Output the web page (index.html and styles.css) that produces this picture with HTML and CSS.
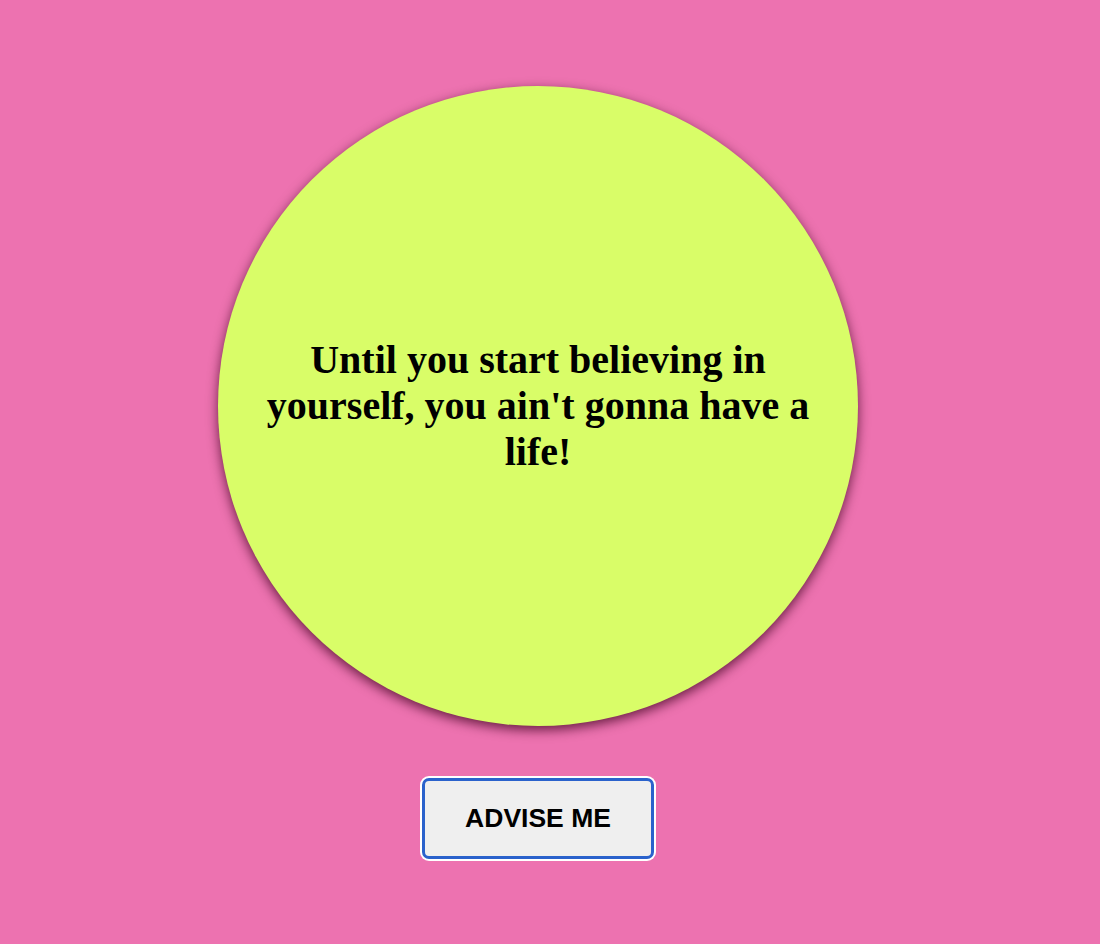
FILE: index.html
```html
<!DOCTYPE html>
<html>
<head>
<meta charset="utf-8">
<link rel="stylesheet" href="styles.css">
</head>
<body>
<main class="app">
  <div class="card">
    <h1 class="advice">Until you start believing in yourself, you ain't gonna have a life!</h1>
  </div>
  <button class="btn">ADVISE ME</button>
</main>
</body>
</html>
```
FILE: styles.css
```css
html, body {
  margin: 0;
  padding: 0;
  height: 100%;
}
body {
  background: #ed72b0;
  font-family: "Liberation Serif", "Times New Roman", serif;
}
.app {
  display: flex;
  flex-direction: column;
  align-items: center;
  padding-top: 86px;
  padding-right: 24px;
}
.card {
  width: 640px;
  height: 640px;
  border-radius: 50%;
  background: #d9fd68;
  box-shadow: 0 4px 12px rgba(60, 0, 30, 0.75);
  display: flex;
  align-items: center;
  justify-content: center;
  padding: 0 40px;
  box-sizing: border-box;
}
.advice {
  margin: 0;
  font-size: 40px;
  line-height: 46px;
  font-weight: bold;
  text-align: center;
  color: #000;
}
.btn {
  margin-top: 52px;
  width: 232px;
  height: 81px;
  background: #efefef;
  border: 3px solid #2a62cc;
  border-radius: 7px;
  box-shadow: 0 0 0 2px #ffffff;
  font-family: "Liberation Sans", Arial, sans-serif;
  font-weight: bold;
  font-size: 26.5px;
  color: #000;
  padding: 0;
}
```
